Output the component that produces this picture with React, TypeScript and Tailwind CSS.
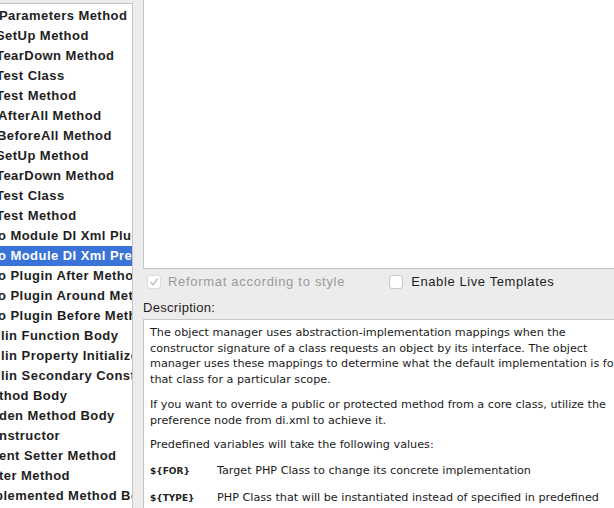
import React from 'react';

type Row = { label: string; shift: string; selected?: boolean };

const rows: Row[] = [
  { label: 'Parameters Method', shift: '-ml-[1px]' },
  { label: 'SetUp Method', shift: '-ml-[4px]' },
  { label: 'TearDown Method', shift: '-ml-[4px]' },
  { label: 'Test Class', shift: '-ml-[4px]' },
  { label: 'Test Method', shift: '-ml-[4px]' },
  { label: 'AfterAll Method', shift: '-ml-[2px]' },
  { label: 'BeforeAll Method', shift: '-ml-[3px]' },
  { label: 'SetUp Method', shift: '-ml-[4px]' },
  { label: 'TearDown Method', shift: '-ml-[4px]' },
  { label: 'Test Class', shift: '-ml-[4px]' },
  { label: 'Test Method', shift: '-ml-[4px]' },
  { label: 'o Module DI Xml Plugin', shift: '-ml-[2px]' },
  { label: 'o Module DI Xml Preference', shift: '-ml-[2px]', selected: true },
  { label: 'o Plugin After Method', shift: '-ml-[2px]' },
  { label: 'o Plugin Around Method', shift: '-ml-[2px]' },
  { label: 'o Plugin Before Method', shift: '-ml-[2px]' },
  { label: 'lin Function Body', shift: 'ml-[1px]' },
  { label: 'lin Property Initializer', shift: 'ml-[1px]' },
  { label: 'lin Secondary Constructor', shift: 'ml-[1px]' },
  { label: 'thod Body', shift: '-ml-[1px]' },
  { label: 'den Method Body', shift: '-ml-[1px]' },
  { label: 'nstructor', shift: '-ml-[1px]' },
  { label: 'ent Setter Method', shift: '-ml-[1px]' },
  { label: 'ter Method', shift: '-ml-[1px]' },
  { label: 'plemented Method Body', shift: '-ml-[5px]' },
];

const sys = { fontFamily: '"Liberation Sans", Arial, sans-serif' };
const verdana = { fontFamily: '"DejaVu Sans", Verdana, sans-serif' };

const Checkbox = ({ checked, disabled }: { checked?: boolean; disabled?: boolean }) => (
  <span
    className={`flex h-[14px] w-[14px] items-center justify-center rounded-[3px] border bg-white ${
      disabled ? 'border-[#dcdcdc]' : 'border-[#c8c8c8]'
    }`}
  >
    {checked && (
      <svg width="10" height="10" viewBox="0 0 10 10">
        <path d="M1.5 5.2 L4 7.8 L8.6 1.6" fill="none" stroke="#b5b5b5" strokeWidth="1.3" />
      </svg>
    )}
  </span>
);

const VarRow = ({ name, children }: { name: string; children: React.ReactNode }) => (
  <div className="mt-[10px] flex">
    <span className="w-[67px] shrink-0 pt-[1px] text-[9px] font-bold text-[#222]">{name}</span>
    <span>{children}</span>
  </div>
);

export default function App() {
  return (
    <div className="flex h-[508px] w-[614px] overflow-hidden bg-[#ececec]" style={sys}>
      <div className="h-full w-[133px] shrink-0 pt-[3px]">
        <div className="h-full overflow-hidden border-t border-r border-[#c6c6c6] bg-white pt-[2px]">
          {rows.map((r, i) => (
            <div
              key={i}
              className={`flex h-[20px] items-center overflow-hidden whitespace-nowrap text-[13px] font-bold tracking-[0.45px] ${
                r.selected ? 'bg-[#3a74d8] text-white' : 'text-[#1e1e1e]'
              }`}
            >
              <span className={r.shift}>{r.label}</span>
            </div>
          ))}
        </div>
      </div>

      <div className="flex min-w-0 flex-1 flex-col pl-[10px]">
        <div className="h-[269px] shrink-0 border-b border-l border-[#c6c6c6] bg-white" />

        <div className="flex h-[25px] shrink-0 items-center text-[13px]">
          <div className="ml-[4px] flex items-center">
            <Checkbox checked disabled />
            <span className="ml-[7px] tracking-[0.7px] text-[#9a9a9a]">Reformat according to style</span>
          </div>
          <div className="ml-[44px] flex items-center">
            <Checkbox />
            <span className="ml-[8px] tracking-[0.6px] text-[#1e1e1e]">Enable Live Templates</span>
          </div>
        </div>

        <div className="flex h-[25px] shrink-0 items-center pt-[2px] text-[13px] tracking-[0.3px] text-[#1e1e1e]">
          Description:
        </div>

        <div
          className="min-h-0 flex-1 overflow-hidden whitespace-nowrap border-t border-l border-[#c6c6c6] bg-white pl-[6px] pt-[5px] text-[11.2px] leading-[15.7px] text-[#1b1b1b]"
          style={verdana}
        >
          <p>
            The object manager uses abstraction-implementation mappings when the
            <br />
            constructor signature of a class requests an object by its interface. The object
            <br />
            manager uses these mappings to determine what the default implementation is for
            <br />
            that class for a particular scope.
          </p>
          <p className="mt-[9px]">
            If you want to override a public or protected method from a core class, utilize the
            <br />
            preference node from di.xml to achieve it.
          </p>
          <p className="mt-[9px]">Predefined variables will take the following values:</p>
          <VarRow name="${FOR}">Target PHP Class to change its concrete implementation</VarRow>
          <VarRow name="${TYPE}">
            PHP Class that will be instantiated instead of specified in predefined
            <br />
            ${'{FOR}'} variable
          </VarRow>
        </div>
      </div>
    </div>
  );
}
